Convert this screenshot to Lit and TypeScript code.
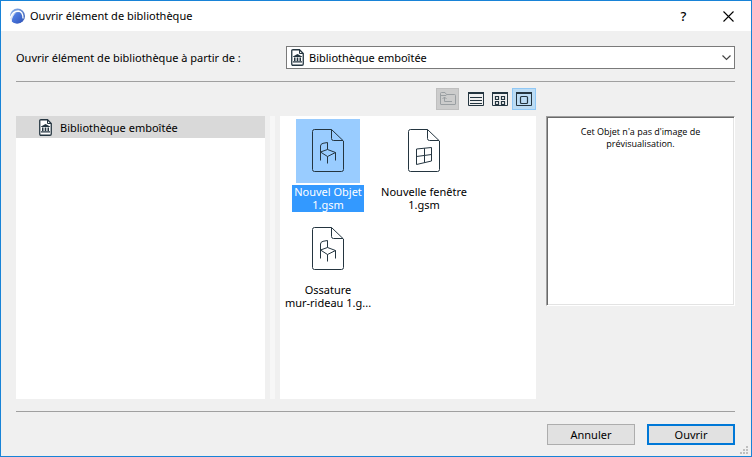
import { LitElement, html, css, svg } from "lit";
import { customElement, state } from "lit/decorators.js";
import { classMap } from "lit/directives/class-map.js";

type View = "list" | "small" | "large";

const libraryIcon = html`<svg class="doc" width="13" height="17" viewBox="0 0 13 17" aria-hidden="true">
  <path d="M2 .75H8.5L12.25 4.5V15Q12.25 16.25 11 16.25H2Q.75 16.25 .75 15V2Q.75 .75 2 .75Z" fill="#fff" stroke="#243540" stroke-width="1.3"/>
  <path d="M8.5 1V4.5H12" fill="none" stroke="#243540"/>
  <path d="M6.5 5L11 7.4V8H2V7.4Z M3 8.5H4.5V12H3Z M5.7 8.5H7.3V12H5.7Z M8.5 8.5H10V12H8.5Z M2 12.2H11V13.5H2Z" fill="#243540"/>
</svg>`;

const glyphs = {
  chair: svg`<path d="M24.5 41.5V27Q24.5 25 27 24.3L31.5 23.5V30.5 M24.5 33L31.5 30.5L39.5 33.5L31.5 37.5Z M31.5 37.5V44.5 M39.5 33.5V41.5"/>`,
  window: svg`<path d="M24.5 30L39.5 28.5V42L24.5 45.5Z M32.5 29.2V43.6 M24.5 37.5L39.5 35.5"/>`,
};

const files: { lines: string[]; glyph: keyof typeof glyphs }[] = [
  { lines: ["Nouvel Objet", "1.gsm"], glyph: "chair" },
  { lines: ["Nouvelle fenêtre", "1.gsm"], glyph: "window" },
  { lines: ["Ossature", "mur-rideau 1.g..."], glyph: "chair" },
];

const views: { id: View; title: string; shape: unknown }[] = [
  { id: "list", title: "Liste", shape: svg`<path d="M2 5.5H14M2 8.5H14M2 11.5H14"/>` },
  { id: "small", title: "Petites icônes", shape: svg`<path d="M3.5 4.5H6.5V7.5H3.5Z M9.5 4.5H12.5V7.5H9.5Z M3.5 9.5H6.5V12.5H3.5Z M9.5 9.5H12.5V12.5H9.5Z" stroke-width="1.2"/>` },
  { id: "large", title: "Grandes icônes", shape: svg`<rect x="4.5" y="4.5" width="7" height="7" rx="1" stroke-width="1.2"/>` },
];

@customElement("app-root")
export class AppRoot extends LitElement {
  @state() private selected = 0;
  @state() private view: View = "large";

  static styles = css`
    :host {
      display: flex;
      flex-direction: column;
      box-sizing: border-box;
      min-height: 100vh;
      border: 1px solid #1883d7;
      background: #f0f0f0;
      color: #000;
      font: 11px/13px "Noto Sans", "Open Sans", sans-serif;
    }
    * { box-sizing: border-box; }
    button, select { font: inherit; color: inherit; margin: 0; padding: 0; border: 0; border-radius: 0; background: none; }
    svg { display: block; }
    .titlebar { display: flex; align-items: center; height: 30px; padding-left: 8px; background: #fff; }
    .title { flex: 1; margin: 0 0 0 5px; font-size: 11px; line-height: 16px; font-weight: 400; }
    .caption { display: grid; place-items: center; width: 45px; height: 30px; font-size: 13px; font-weight: 500; }
    .body { flex: 1; display: flex; flex-direction: column; padding: 15px 16px 11px 15px; }
    .source { display: grid; grid-template-columns: 270px 1fr; align-items: center; padding-bottom: 12px; border-bottom: 1px solid #a0a0a0; }
    .combo { display: grid; grid-template-columns: 1fr; align-items: center; }
    .combo > * { grid-area: 1 / 1; }
    .combo select { appearance: none; width: 100%; height: 23px; padding-left: 22px; border: 1px solid #7a7a7a; background: #fff; }
    .combo svg { pointer-events: none; }
    .combo .doc { margin-left: 5px; }
    .combo .arrow { justify-self: end; margin-right: 4px; }
    .panes { flex: 1; display: grid; grid-template-columns: 249fr 5px 256fr 194px; grid-template-rows: 28px 1fr; column-gap: 5px; padding: 6px 0 12px; }
    .toolbar { grid-area: 1 / 3; display: flex; justify-content: flex-end; }
    .tool { display: grid; place-items: center; width: 24px; height: 22px; border: 1px solid transparent; }
    .tool.up { width: 23px; margin-right: 5px; background: #ccc; border-color: #bfbfbf; }
    .tool.on { background: #bcdcf4; border-color: #90c8f6; }
    .tree { grid-area: 2 / 1; background: #fff; }
    .node { display: flex; align-items: center; gap: 8px; width: 100%; height: 22px; padding-left: 23px; background: #d9d9d9; }
    .splitter { grid-area: 2 / 2; background: #f7f7f7; }
    .files { grid-area: 2 / 3; display: grid; grid-template-columns: repeat(auto-fill, 96px); grid-auto-rows: 98px; align-content: start; padding-top: 3px; background: #fff; }
    .file { display: flex; flex-direction: column; align-items: center; gap: 2px; }
    .name { padding: 0 2px 1px; white-space: nowrap; }
    .name span { display: block; }
    .file.on svg { background: #99ccff; }
    .file.on .name { background: #3399ff; color: #fff; }
    .preview { grid-area: 2 / 4; width: 189px; justify-self: end; align-self: start; height: 190px; padding: 9px 24px; border: 1px solid; border-color: #a0a0a0 #fff #fff #a0a0a0; box-shadow: inset 1px 1px #696969, inset -1px -1px #e3e3e3; background: #fff; font-family: "Open Sans", "Noto Sans", sans-serif; font-size: 9px; line-height: 12px; text-align: center; }
    .actions { display: flex; justify-content: flex-end; gap: 12px; padding-top: 12px; border-top: 1px solid #a0a0a0; }
    .action { width: 88px; height: 21px; border: 1px solid #adadad; background: #e1e1e1; }
    .action.primary { border: 2px solid #0078d7; }
    .grip { position: absolute; right: 4px; bottom: 3px; }
  `;

  render() {
    return html`
      <header class="titlebar">
        <svg width="16" height="16" viewBox="0 0 16 16" aria-hidden="true">
          <defs>
            <linearGradient id="rim" x1="0" y1="0" x2="1" y2="1"><stop offset="0" stop-color="#8fb8f0"/><stop offset="1" stop-color="#2c4fae"/></linearGradient>
            <linearGradient id="dome" x1="0" y1="0" x2="1" y2="1"><stop offset="0" stop-color="#5c8cee"/><stop offset="1" stop-color="#2f55bd"/></linearGradient>
          </defs>
          <circle cx="8.5" cy="8" r="7.5" fill="url(#rim)"/>
          <path d="M1 10C3 5.2 6.2 3 9.3 3C12.4 3.2 14 6 14 10.5" fill="none" stroke="#fff" stroke-width="1.3"/>
          <path d="M1 9.5C1 12 2 13.8 3.3 14.5C3 11 4.5 7.5 7 5C4.5 5.5 2.5 7 1 9.5Z" fill="#fff" opacity=".75"/>
          <path d="M2.8 13.5C3.2 8.5 6 4.5 9.2 4.4C12 4.5 13.2 8 13.3 13C10.8 16 5.5 16.2 2.8 13.5Z" fill="url(#dome)"/>
        </svg>
        <h1 class="title">Ouvrir élément de bibliothèque</h1>
        <button class="caption" aria-label="Aide">?</button>
        <button class="caption" aria-label="Fermer">
          <svg width="11" height="11" viewBox="0 0 11 11"><path d="M.5 .5L10.5 10.5M10.5 .5L.5 10.5" stroke="#000" stroke-width="1.1"/></svg>
        </button>
      </header>
      <main class="body">
        <div class="source">
          <label for="source">Ouvrir élément de bibliothèque à partir de :</label>
          <div class="combo">
            <select id="source"><option>Bibliothèque emboîtée</option></select>
            ${libraryIcon}
            <svg class="arrow" width="9" height="6" viewBox="0 0 9 6" aria-hidden="true"><path d="M.5 .5L4.5 4.5L8.5 .5" fill="none" stroke="#444" stroke-width="1.2"/></svg>
          </div>
        </div>
        <div class="panes">
          <div class="toolbar">
            <button class="tool up" aria-label="Dossier parent" disabled>
              <svg width="16" height="14" viewBox="0 0 16 14" fill="none" stroke="#9a9fa2">
                <path d="M.5 12V1.5Q.5 .5 1.5 .5H5L6.5 2.5H14.5Q15.5 2.5 15.5 3.5V12Q15.5 12.5 15 12.5H1Q.5 12.5 .5 12Z M.5 3.5H6L7 2.5 M4.5 5V9.5H12 M2.5 7L4.5 5L6.5 7"/>
              </svg>
            </button>
            ${views.map((v) => html`
              <button class=${classMap({ tool: true, on: this.view === v.id })} aria-label=${v.title} aria-pressed=${this.view === v.id} @click=${() => (this.view = v.id)}>
                <svg width="16" height="14" viewBox="0 0 16 14" fill="none" stroke="#243540">
                  <path d="M.5 .5H15.5V13.5H.5Z"/><path d="M0 1H16" stroke-width="2"/>${v.shape}
                </svg>
              </button>`)}
          </div>
          <nav class="tree" aria-label="Bibliothèques">
            <button class="node">${libraryIcon}<span>Bibliothèque emboîtée</span></button>
          </nav>
          <div class="splitter" role="separator"></div>
          <section class="files" aria-label="Fichiers">
            ${files.map((f, i) => html`
              <button class=${classMap({ file: true, on: this.selected === i })} aria-pressed=${this.selected === i} @click=${() => (this.selected = i)}>
                <svg width="64" height="64" viewBox="0 0 64 64" fill="none" stroke="#243540" aria-hidden="true">
                  <path d="M18.5 10.5H35.5L47.5 22V50.5Q47.5 52.5 45.5 52.5H18.5Q16.5 52.5 16.5 50.5V12.5Q16.5 10.5 18.5 10.5Z M35.5 10.5V19.5Q35.5 21.5 37.5 21.5H47"/>
                  ${glyphs[f.glyph]}
                </svg>
                <span class="name">${f.lines.map((l) => html`<span>${l}</span>`)}</span>
              </button>`)}
          </section>
          <aside class="preview">Cet Objet n'a pas d'image de prévisualisation.</aside>
        </div>
        <footer class="actions">
          <button class="action">Annuler</button>
          <button class="action primary">Ouvrir</button>
        </footer>
      </main>
      <svg class="grip" width="8" height="8" viewBox="0 0 8 8" aria-hidden="true">
        <path d="M6 0h2v2H6zM3 3h2v2H3zM6 3h2v2H6zM0 6h2v2H0zM3 6h2v2H3zM6 6h2v2H6z" fill="#bfbfbf"/>
      </svg>
    `;
  }
}
